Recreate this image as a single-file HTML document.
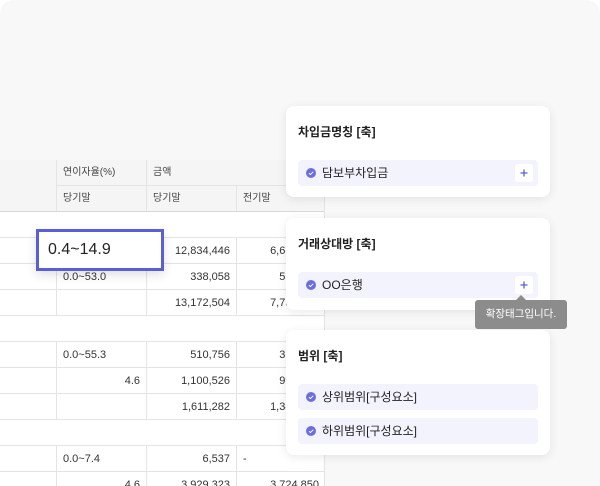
<!DOCTYPE html>
<html><head><meta charset="utf-8"><style>
*{margin:0;padding:0;box-sizing:border-box}
html,body{width:600px;height:486px;overflow:hidden;background:#fff}
body{font-family:"Liberation Sans","Noto Sans CJK KR",sans-serif;position:relative}
.bg{position:absolute;left:0;top:0;width:600px;height:486px;background:#f8f8f8;border-radius:14px 14px 0 0}
.t{position:absolute;left:0;top:160px;width:325px;background:#fff;border-right:1px solid #e4e4e4}
.r{position:relative;height:26px;border-bottom:1px solid #e4e4e4;font-size:11px;color:#333}
.c{position:absolute;top:0;height:25px;line-height:26px;border-left:1px solid #e4e4e4;padding:0 6px;white-space:nowrap;overflow:hidden}
.h{background:#f5f5f5;color:#444;font-size:10px}
.n{text-align:right}
.card{position:absolute;left:286px;width:264px;background:#fff;border-radius:8px;box-shadow:0 2px 10px rgba(0,0,0,.09)}
.tt{position:absolute;left:12px;top:17px;font-size:12px;font-weight:bold;color:#222}
.chip{position:absolute;left:12px;width:240px;height:26px;background:#f3f3fd;border-radius:4px;font-size:12px;color:#222;line-height:26px;padding-left:24px}
.ck{position:absolute;left:8px;top:8px;width:10px;height:10px}
.plus{position:absolute;right:5px;top:4px;width:18px;height:18px;background:#fff;border-radius:3px}
</style></head><body>
<svg width="0" height="0" style="position:absolute"><defs><symbol id="k" viewBox="0 0 10 10"><circle cx="5" cy="5" r="5" fill="#6b6ee0"/><path d="M3 5.2l1.4 1.4L7.2 3.8" stroke="#fff" stroke-width="1" fill="none"/></symbol><symbol id="p" viewBox="0 0 18 18"><path d="M9 5.5v7M5.5 9h7" stroke="#5b5fd6" stroke-width="1.3"/></symbol></defs></svg>
<div class="bg"></div>
<div class="t">
 <div class="r h" style="height:52px;border-bottom:1px solid #d8d8d8">
  <div class="c" style="left:0;width:56px;height:51px;border-left:none"></div>
  <div class="c" style="left:56px;width:90px;border-bottom:1px solid #e4e4e4;height:26px">연이자율(%)</div>
  <div class="c" style="left:146px;width:179px;border-bottom:1px solid #e4e4e4;height:26px">금액</div>
  <div class="c" style="left:56px;top:26px;width:90px">당기말</div>
  <div class="c" style="left:146px;top:26px;width:90px">당기말</div>
  <div class="c" style="left:236px;top:26px;width:89px">전기말</div>
 </div>
 <div class="r"></div>
 <div class="r"><div class="c" style="left:56px;width:90px"></div><div class="c n" style="left:146px;width:90px">12,834,446</div><div class="c n" style="left:236px;width:89px">6,612,318</div></div>
 <div class="r"><div class="c" style="left:56px;width:90px">0.0~53.0</div><div class="c n" style="left:146px;width:90px">338,058</div><div class="c n" style="left:236px;width:89px">512,437</div></div>
 <div class="r"><div class="c" style="left:56px;width:90px"></div><div class="c n" style="left:146px;width:90px">13,172,504</div><div class="c n" style="left:236px;width:89px">7,734,860</div></div>
 <div class="r"></div>
 <div class="r"><div class="c" style="left:56px;width:90px">0.0~55.3</div><div class="c n" style="left:146px;width:90px">510,756</div><div class="c n" style="left:236px;width:89px">355,213</div></div>
 <div class="r"><div class="c n" style="left:56px;width:90px">4.6</div><div class="c n" style="left:146px;width:90px">1,100,526</div><div class="c n" style="left:236px;width:89px">990,106</div></div>
 <div class="r"><div class="c" style="left:56px;width:90px"></div><div class="c n" style="left:146px;width:90px">1,611,282</div><div class="c n" style="left:236px;width:89px">1,345,319</div></div>
 <div class="r"></div>
 <div class="r"><div class="c" style="left:56px;width:90px">0.0~7.4</div><div class="c n" style="left:146px;width:90px">6,537</div><div class="c" style="left:236px;width:89px">-</div></div>
 <div class="r"><div class="c n" style="left:56px;width:90px">4.6</div><div class="c n" style="left:146px;width:90px">3,929,323</div><div class="c n" style="left:236px;width:89px">3,724,850</div></div>
</div>
<div style="position:absolute;left:36px;top:229px;width:128px;height:42px;border:3px solid #5b5fd6;background:#fff;font-size:16px;line-height:36px;padding-left:9px;color:#222;box-shadow:0 4px 10px rgba(0,0,0,.12)">0.4~14.9</div>

<div class="card" style="top:106px;height:91px"><div class="tt">차입금명칭 [축]</div><div class="chip" style="top:54px"><svg class="ck"><use href="#k"/></svg>담보부차입금<svg class="plus"><use href="#p"/></svg></div></div>
<div class="card" style="top:218px;height:92px"><div class="tt">거래상대방 [축]</div><div class="chip" style="top:54px"><svg class="ck"><use href="#k"/></svg>OO은행<svg class="plus"><use href="#p"/></svg></div></div>
<div class="card" style="top:330px;height:125px"><div class="tt">범위 [축]</div><div class="chip" style="top:54px"><svg class="ck"><use href="#k"/></svg>상위범위[구성요소]</div><div class="chip" style="top:88px"><svg class="ck"><use href="#k"/></svg>하위범위[구성요소]</div></div>
<div style="position:absolute;left:516px;top:295px;width:0;height:0;border:5px solid transparent;border-bottom-color:#8c8c8c;border-top:none"></div>
<div style="position:absolute;left:475px;top:300px;width:92px;height:29px;background:#8c8c8c;border-radius:3px;color:#fff;font-size:10.5px;line-height:29px;text-align:center">확장태그입니다.</div>
</body></html>
